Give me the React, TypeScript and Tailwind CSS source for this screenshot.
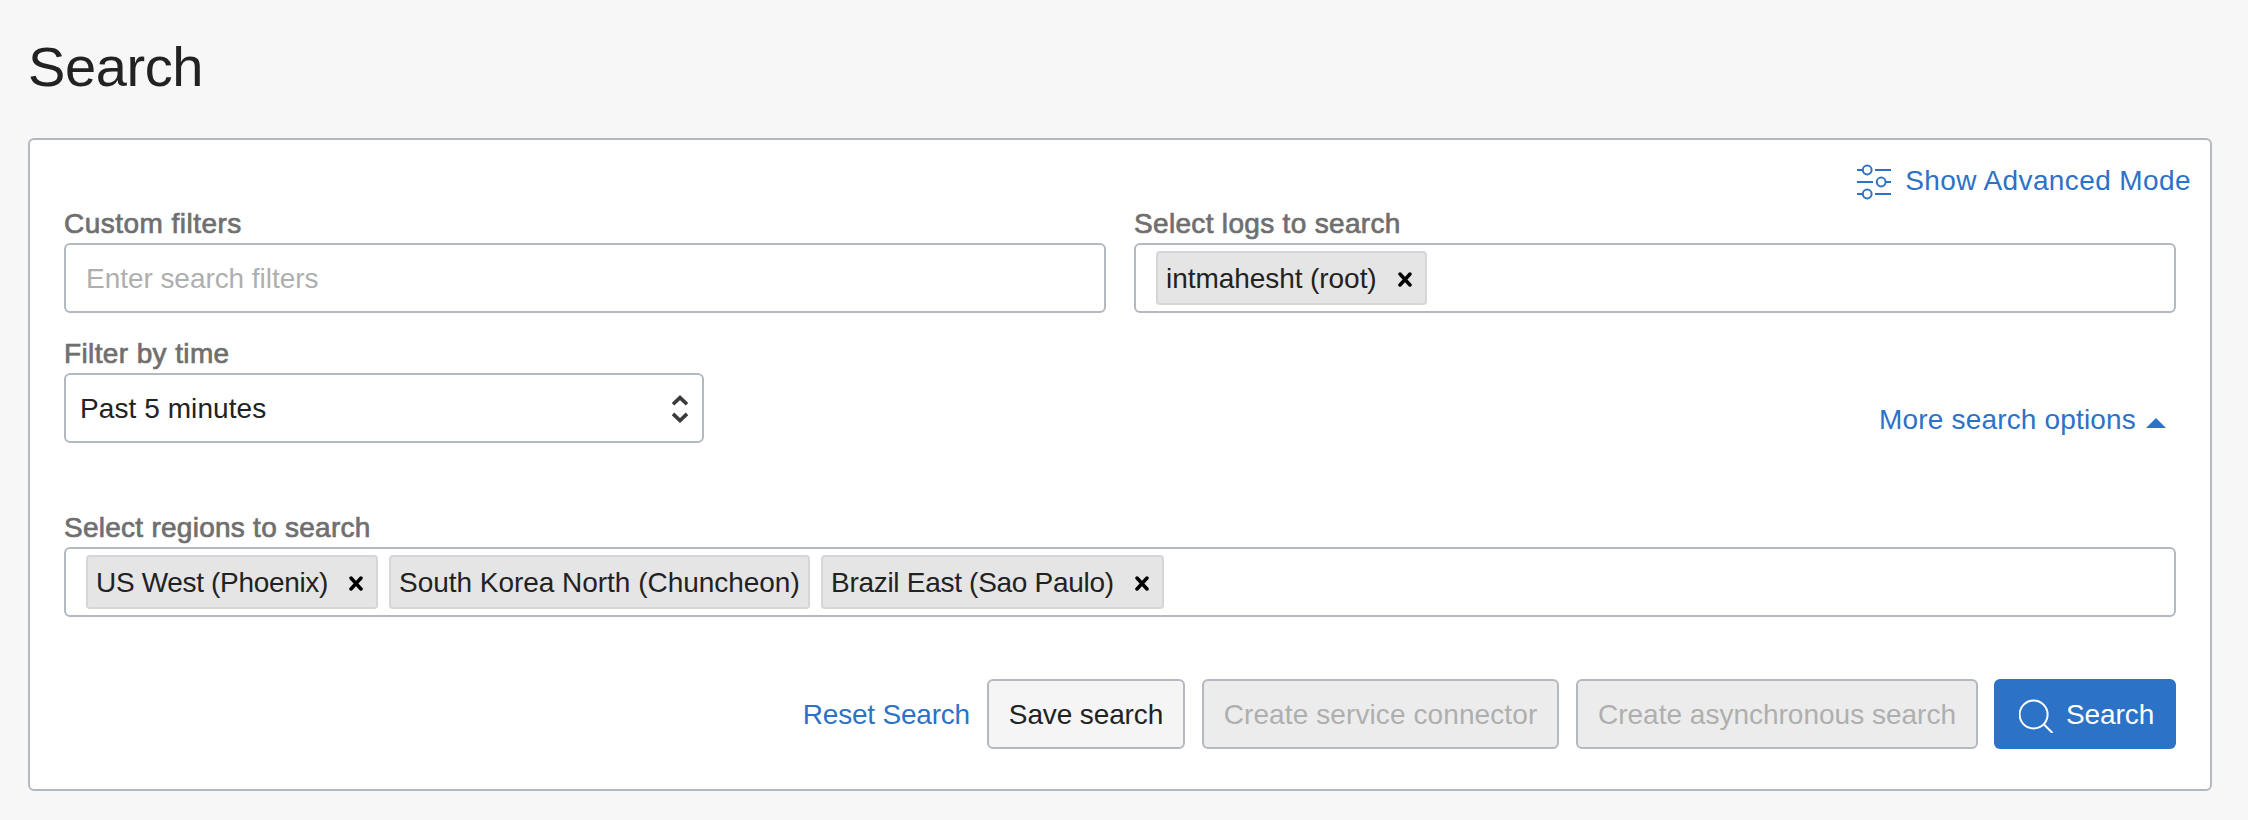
import type { ReactNode } from 'react';

const labelClass =
  'block h-8 mb-1 pt-px leading-8 text-[#6f6f6f] [-webkit-text-stroke:0.7px_#6f6f6f] whitespace-nowrap';
const boxClass = 'flex h-[70px] items-center rounded-[6px] border-2 border-[#b4b9c0] bg-white';

function Field({ label, tracking, children, className = '' }: { label: string; tracking: string; children: ReactNode; className?: string }) {
  return (
    <div className={className}>
      <label className={`${labelClass} ${tracking}`}>{label}</label>
      {children}
    </div>
  );
}

function Tag({ text, width, tracking, removable = true }: { text: string; width: string; tracking: string; removable?: boolean }) {
  return (
    <span className={`flex h-[54px] items-center justify-between whitespace-nowrap rounded-[4px] border-2 border-[#d6d6d6] bg-[#e5e5e5] pl-2 ${width} ${tracking}`}>
      <span className="pt-[2px]">{text}</span>
      {removable && (
        <svg className="mt-[2px] mr-[13px] h-[15px] w-[14px] shrink-0" viewBox="0 0 14 15" fill="none" stroke="#000" strokeWidth="3.5" strokeLinecap="round">
          <path d="M2 2 12 13M12 2 2 13" />
        </svg>
      )}
    </span>
  );
}

function SlidersIcon() {
  return (
    <svg className="h-9 w-[34px] shrink-0" viewBox="0 0 34 36" fill="none" stroke="#2c72c7" strokeWidth="2">
      <path d="M0 6h5.5M18 6h16M0 18h16M29 18h5M0 30h5.5M18 30h16" />
      <circle cx="10.2" cy="6" r="4.4" />
      <circle cx="24.2" cy="18" r="4.4" />
      <circle cx="10.2" cy="30" r="4.4" />
    </svg>
  );
}

export default function App() {
  return (
    <div className="h-[820px] w-[2248px] overflow-hidden bg-[#f7f7f7] pl-7 pr-9 font-['Liberation_Sans',Arial,sans-serif] text-[28px] leading-8 text-[#222]">
      <h1 className="h-[138px] pt-9 text-[56px] leading-[62px] tracking-[-0.4px]">Search</h1>
      <main className="h-[653px] rounded-[6px] border-2 border-[#b4b9c0] bg-white px-[34px] pt-[24px]">
        <div className="-mr-[15px] flex h-9 items-center justify-end gap-[14px]">
          <SlidersIcon />
          <a className="-mt-0.5 whitespace-nowrap tracking-[0.4px] text-[#2c72c7]">Show Advanced Mode</a>
        </div>

        <div className="mt-[7px] grid grid-cols-2 gap-7">
          <Field label="Custom filters" tracking="tracking-[0.47px]">
            <div className={`${boxClass} pt-[2px] pl-5 tracking-[-0.05px] text-[#afafaf]`}>Enter search filters</div>
          </Field>
          <Field label="Select logs to search" tracking="tracking-[0.32px]">
            <div className={`${boxClass} pl-5`}>
              <Tag text="intmahesht (root)" width="w-[271px]" tracking="tracking-[-0.06px]" />
            </div>
          </Field>
        </div>

        <div className="mt-6 flex justify-between">
          <Field label="Filter by time" tracking="tracking-[0.38px]" className="w-[640px]">
            <div className={`${boxClass} justify-between pl-[14px] pr-[13px] tracking-[0.08px]`}>
              <span className="pt-[2px]">Past 5 minutes</span>
              <svg className="mt-[2px] h-[30px] w-[18px]" viewBox="0 0 18 30" fill="none" stroke="#3a3a3a" strokeWidth="3.6">
                <path d="M2 10.3 9 3.6l7 6.7M2 19.9l7 6.7 7-6.7" />
              </svg>
            </div>
          </Field>
          <a className="mt-[67px] mr-[10px] flex h-8 whitespace-nowrap tracking-[0.17px] text-[#2c72c7]">
            More search options
            <svg className="ml-[10px] mt-[14px] h-[10px] w-5" viewBox="0 0 20 10" fill="#2c72c7">
              <path d="M0 10 10 0l10 10z" />
            </svg>
          </a>
        </div>

        <Field label="Select regions to search" tracking="tracking-[0.26px]" className="mt-[68px]">
          <div className={`${boxClass} gap-[11px] pl-5`}>
            <Tag text="US West (Phoenix)" width="w-[292px]" tracking="tracking-[-0.33px]" />
            <Tag text="South Korea North (Chuncheon)" width="w-[421px]" tracking="tracking-[-0.03px]" removable={false} />
            <Tag text="Brazil East (Sao Paulo)" width="w-[343px]" tracking="tracking-[-0.29px]" />
          </div>
        </Field>

        <div className="mt-[62px] flex h-[70px] items-center justify-end whitespace-nowrap">
          <a className="mr-[17px] pt-[2px] tracking-[-0.2px] text-[#2c72c7]">Reset Search</a>
          <button className="mr-[17px] h-[70px] w-[198px] rounded-[6px] border-2 border-[#b4b9c0] bg-[#f5f5f5] pt-[2px] tracking-[-0.12px]">Save search</button>
          <button className="mr-[17px] h-[70px] w-[357px] rounded-[6px] border-2 border-[#b4b9c0] bg-[#ececec] pt-[2px] tracking-[0.1px] text-[#afafaf]">
            Create service connector
          </button>
          <button className="mr-4 h-[70px] w-[402px] rounded-[6px] border-2 border-[#b4b9c0] bg-[#ececec] pt-[2px] text-[#afafaf]">
            Create asynchronous search
          </button>
          <button className="flex h-[70px] w-[182px] items-center rounded-[6px] bg-[#2c72c7] pl-[25px] tracking-[-0.1px] text-white">
            <svg className="mr-3 mt-1 h-[34px] w-[35px]" viewBox="0 0 35 34" fill="none" stroke="#fff" strokeWidth="2">
              <circle cx="14.6" cy="15.5" r="14" />
              <path d="m25 25.5 8.5 8.5" />
            </svg>
            <span className="pt-[2px]">Search</span>
          </button>
        </div>
      </main>
    </div>
  );
}
